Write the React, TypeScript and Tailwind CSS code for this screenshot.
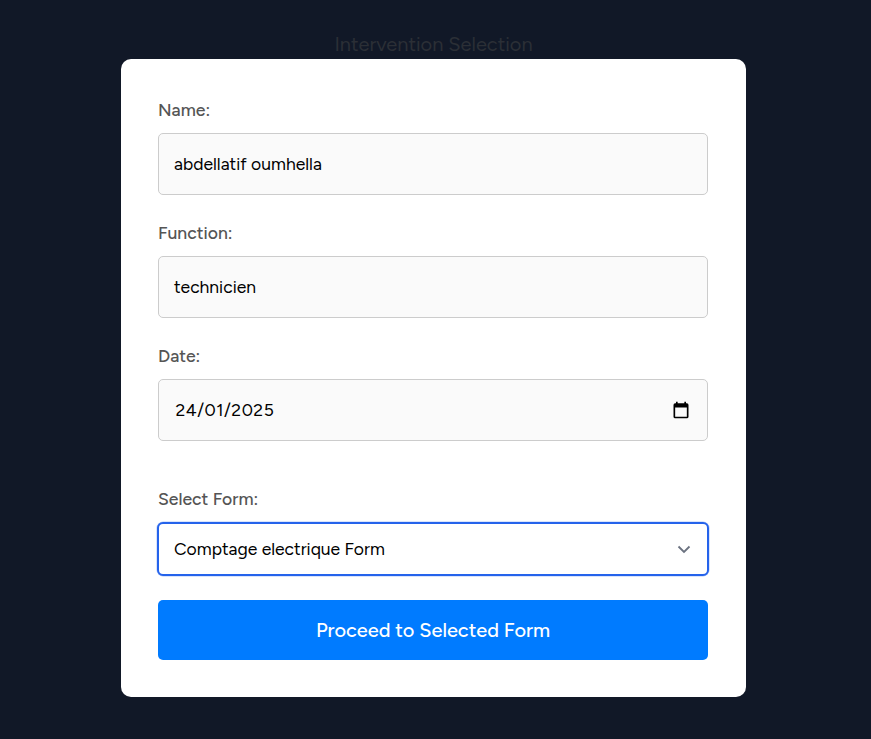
import React from "react";

const font = "font-['Figtree','Inter',sans-serif]";

function Label({ children, className = "" }: { children: React.ReactNode; className?: string }) {
  return <div className={`text-[17.6px] leading-[19px] font-[530] text-[#555] ${className}`}>{children}</div>;
}

function Field({ label, value, icon }: { label: string; value: React.ReactNode; icon?: boolean }) {
  return (
    <div className="mb-[28px]">
      <Label className="mb-[14px]">{label}</Label>
      <div className="h-[62px] rounded-[5px] border border-[#ccc] bg-[#fafafa] pl-[15px] pr-[16px] flex items-center justify-between text-[17.5px] text-black">
        <span>{value}</span>
        {icon && (
          <svg width="20" height="20" viewBox="0 0 24 24" fill="#000">
            <path d="M19 4h-1V2h-2v2H8V2H6v2H5a2 2 0 0 0-2 2v14a2 2 0 0 0 2 2h14a2 2 0 0 0 2-2V6a2 2 0 0 0-2-2zm0 16H5V9h14v11z" />
          </svg>
        )}
      </div>
    </div>
  );
}

export default function App() {
  return (
    <div className={`${font} min-h-[739px] bg-[#111827]`}>
      <div className="relative w-[867px] min-h-[739px] flex justify-center pt-[59px]">
        <div className="absolute top-[32px] left-0 right-0 text-center text-[20px] leading-[24px] text-[#2b2f36]">Intervention Selection</div>
        <div className="relative w-[625px] h-[638px] bg-white rounded-[10px] pl-[37px] pr-[38px] pt-[41px]">
          <Field label="Name:" value="abdellatif oumhella" />
          <Field label="Function:" value="technicien" />
          <Field label="Date:" value={<span className="pl-[1.5px] tracking-[0.52px]">24/01/2025</span>} icon />
          <Label className="mt-[48px] mb-[14px]">Select Form:</Label>
          <div className="h-[54px] -mx-[1px] rounded-[6px] border-2 border-[#2563eb] shadow-[0_0_0_0.5px_rgba(37,99,235,0.35)] bg-white pl-[15px] pr-[15px] flex items-center justify-between text-[17.5px] text-black">
            <span>Comptage electrique Form</span>
            <svg width="16" height="16" viewBox="0 0 16 16" fill="none" stroke="#6b7280" strokeWidth="1.8"><path d="M2.5 5.5L8 11l5.5-5.5" /></svg>
          </div>
          <div className="mt-[24px] h-[60px] pt-[2px] rounded-[5px] bg-[#007bff] flex items-center justify-center text-white text-[19.95px] font-medium">Proceed to Selected Form</div>
        </div>
      </div>
    </div>
  );
}
